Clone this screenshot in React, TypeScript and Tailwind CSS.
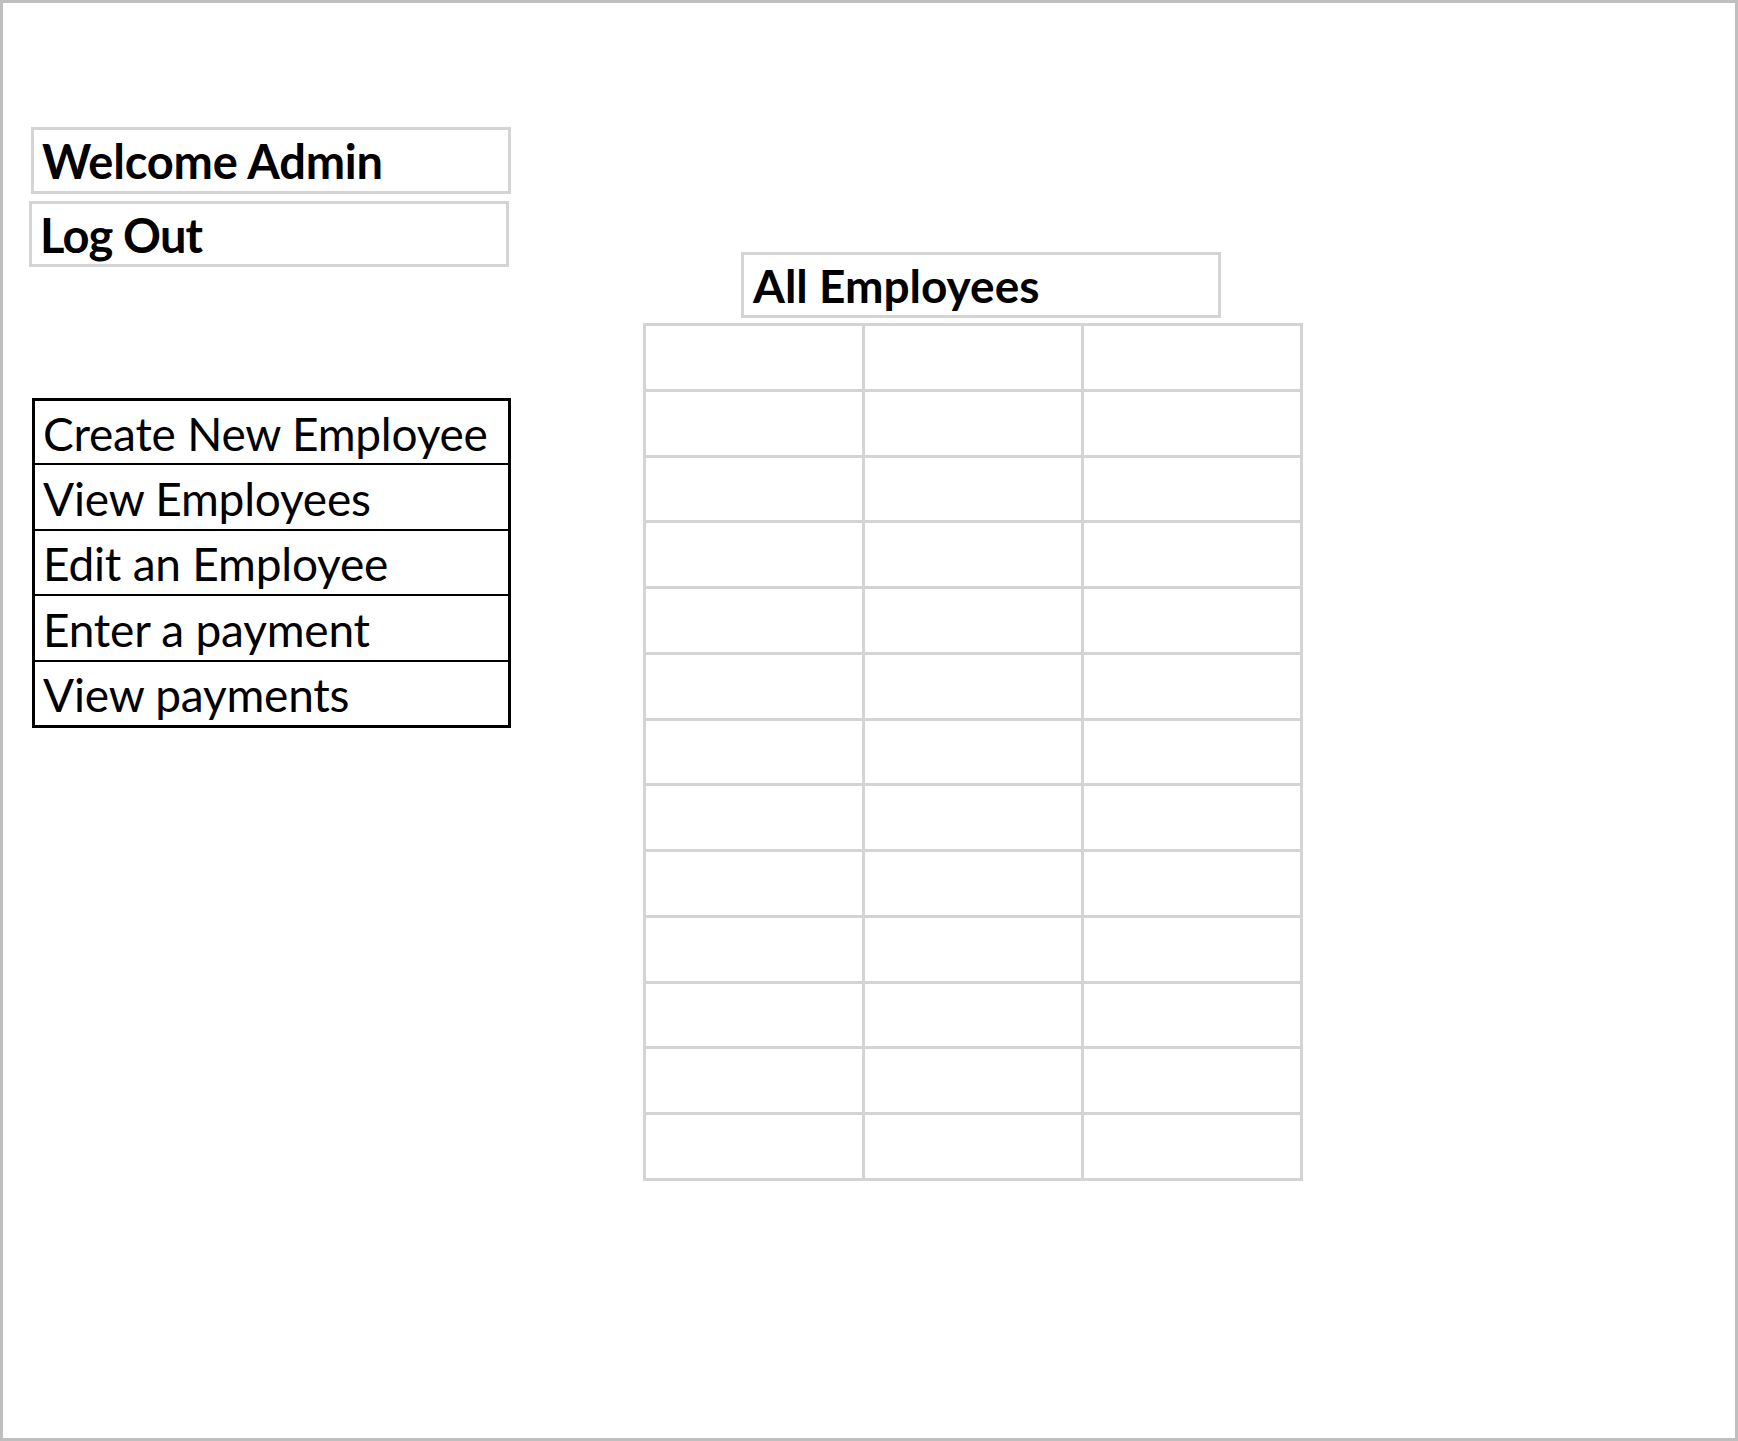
import React from "react";

const font = { fontFamily: "Lato, 'Open Sans', sans-serif" };

export default function App() {
  const menu = [
    "Create New Employee",
    "View Employees",
    "Edit an Employee",
    "Enter a payment",
    "View payments",
  ];
  const rowH = ["h-[62px]", "h-[66px]", "h-[65px]", "h-[66px]", "h-[65px]"];
  const cells = Array.from({ length: 39 });
  return (
    <div
      className="w-[1738px] h-[1441px] bg-white border-[3px] border-[#bfbfbf] box-border flex text-black"
      style={font}
    >
      <div className="w-[508px] flex flex-col shrink-0">
        <div className="mt-[124px] ml-[28px] w-[480px] h-[67px] border-[3px] border-[#d4d4d4] flex items-center pl-[8px] pt-[2px]">
          <span className="text-[47px] font-bold leading-none tracking-[-0.2px] whitespace-nowrap">
            Welcome Admin
          </span>
        </div>
        <div className="mt-[7px] ml-[26px] w-[480px] h-[66px] border-[3px] border-[#d4d4d4] flex items-center pl-[8px] pt-[2px]">
          <span className="text-[47px] font-bold leading-none tracking-[-0.8px] whitespace-nowrap">
            Log Out
          </span>
        </div>
        <div className="mt-[131px] ml-[29px] w-[479px] border-[3px] border-black flex flex-col">
          {menu.map((m, i) => (
            <div
              key={m}
              className={
                rowH[i] +
                " flex items-center pl-[8px] pt-[3px] " +
                (i > 0 ? "border-t-2 border-black" : "")
              }
            >
              <span className="text-[46px] leading-none tracking-[-0.2px] whitespace-nowrap">
                {m}
              </span>
            </div>
          ))}
        </div>
      </div>
      <div className="ml-[132px] mt-[249px] flex flex-col">
        <div className="ml-[98px] w-[480px] h-[66px] border-[3px] border-[#d4d4d4] flex items-center pl-[9px] pt-[2px]">
          <span className="text-[46px] font-bold leading-none tracking-[0px] whitespace-nowrap">
            All Employees
          </span>
        </div>
        <div className="mt-[5px] w-[660px] h-[858px] border-l-[3px] border-t-[3px] border-[#d4d4d4] grid grid-cols-3 grid-rows-[repeat(13,1fr)]">
          {cells.map((_, i) => (
            <div key={i} className="border-r-[3px] border-b-[3px] border-[#d4d4d4]" />
          ))}
        </div>
      </div>
    </div>
  );
}
